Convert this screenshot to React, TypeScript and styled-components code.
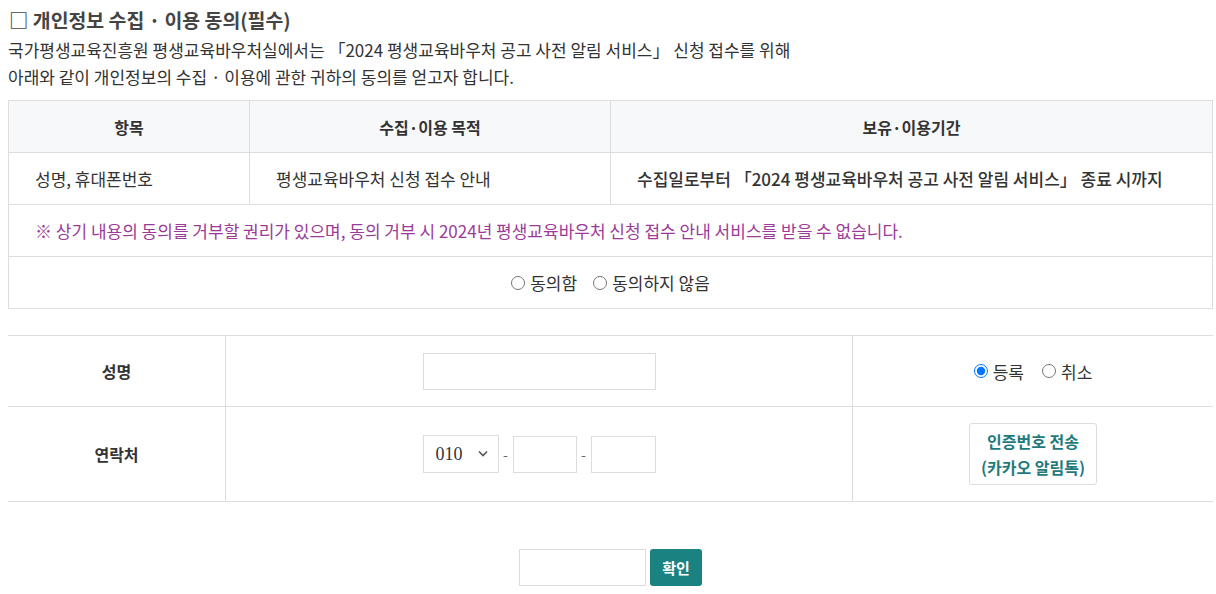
import styled, { createGlobalStyle } from "styled-components";

const GlobalStyle = createGlobalStyle`
  body {
    margin: 0;
    background: #fff;
    font-family: "Noto Sans CJK KR", "Noto Sans", sans-serif;
    color: #333;
  }
`;

const Page = styled.div`
  width: 1205px;
  padding: 8px 0 0 8px;
`;

const Title = styled.h3`
  margin: 0;
  font-size: 19.4px;
  line-height: 24px;
  font-weight: 700;
  color: #444;
  padding-left: 1px;
`;

const Intro = styled.p`
  margin: 4px 0 0;
  font-size: 17px;
  line-height: 27px;
  color: #333;
`;

const ConsentTable = styled.table`
  width: 100%;
  margin-top: 10px;
  border-collapse: collapse;
  font-size: 17px;
  color: #333;
`;

const Th = styled.th<{ $w?: number }>`
  height: 51px;
  padding: 0;
  border: 1px solid #ddd;
  background: #f7f8fa;
  font-size: 16px;
  font-weight: 700;
  text-align: center;
  width: ${(p) => (p.$w ? `${p.$w}px` : "auto")};
`;

const Td = styled.td<{ $bold?: boolean; $center?: boolean; $notice?: boolean }>`
  height: 51px;
  padding: 0 0 0 26px;
  border: 1px solid #ddd;
  font-weight: ${(p) => (p.$bold ? 500 : 400)};
  text-align: ${(p) => (p.$center ? "center" : "left")};
  color: ${(p) => (p.$notice ? "#9c3a99" : "#333")};
  ${(p) => (p.$center ? "padding-left: 0;" : "")}
`;

const RadioLabel = styled.label<{ $gap?: number }>`
  display: inline-flex;
  align-items: center;
  margin: 0 ${(p) => p.$gap ?? 8}px;
  font-size: 17px;
  color: #333;

  input {
    margin: 0 5px 0 0;
    width: 14px;
    height: 14px;
  }
`;

const FormTable = styled.table`
  width: 100%;
  margin-top: 26px;
  border-collapse: collapse;
  border-top: 1px solid #ddd;
`;

const Row = styled.tr<{ $h: number }>`
  height: ${(p) => p.$h}px;
  border-bottom: 1px solid #ddd;
`;

const LabelCell = styled.th`
  width: 217px;
  padding: 0;
  font-size: 16px;
  font-weight: 700;
  color: #333;
  border-right: 1px solid #ddd;
`;

const FieldCell = styled.td`
  padding: 0;
  text-align: center;
  border-right: 1px solid #ddd;
`;

const SideCell = styled.td`
  width: 360px;
  padding: 0;
  text-align: center;
`;

const FieldLine = styled.div`
  display: inline-flex;
  align-items: center;
`;

const TextInput = styled.input<{ $w: number }>`
  box-sizing: border-box;
  width: ${(p) => p.$w}px;
  height: 37px;
  border: 1px solid #ddd;
  padding: 0 8px;
  font-size: 15px;
  outline: none;
  background: #fff;
`;

const SelectWrap = styled.div`
  position: relative;
  display: inline-flex;
`;

const PhoneSelect = styled.select`
  box-sizing: border-box;
  width: 76px;
  height: 38px;
  border: 1px solid #ddd;
  border-radius: 0;
  padding: 0 0 0 12px;
  appearance: none;
  font-family: "Liberation Serif", serif;
  font-size: 18px;
  color: #333;
  background: #fff;
`;

const Chevron = styled.svg`
  position: absolute;
  right: 11px;
  top: 15px;
  pointer-events: none;
`;

const Dash = styled.span`
  width: 14px;
  text-align: center;
  font-size: 14px;
  color: #666;
`;

const SendButton = styled.button`
  width: 128px;
  height: 62px;
  border: 1px solid #ddd;
  border-radius: 3px;
  background: #fff;
  color: #1f7a7e;
  font-family: inherit;
  font-size: 16px;
  font-weight: 700;
  line-height: 26px;
  padding: 0;
  cursor: pointer;
`;

const Footer = styled.div`
  display: flex;
  justify-content: center;
  gap: 4px;
  margin-top: 47px;
`;

const ConfirmButton = styled.button`
  width: 52px;
  height: 37px;
  border: none;
  border-radius: 3px;
  background: #1b8282;
  color: #fff;
  font-family: inherit;
  font-size: 15px;
  font-weight: 700;
  cursor: pointer;
`;

export default function App() {
  return (
    <Page>
      <GlobalStyle />
      <Title>□ 개인정보 수집 · 이용 동의(필수)</Title>
      <Intro>
        국가평생교육진흥원 평생교육바우처실에서는 「2024 평생교육바우처 공고 사전 알림 서비스」 신청 접수를 위해
        <br />
        아래와 같이 개인정보의 수집 · 이용에 관한 귀하의 동의를 얻고자 합니다.
      </Intro>
      <ConsentTable>
        <thead>
          <tr>
            <Th $w={240}>항목</Th>
            <Th $w={360}>수집·이용 목적</Th>
            <Th>보유·이용기간</Th>
          </tr>
        </thead>
        <tbody>
          <tr>
            <Td>성명, 휴대폰번호</Td>
            <Td>평생교육바우처 신청 접수 안내</Td>
            <Td $bold>수집일로부터 「2024 평생교육바우처 공고 사전 알림 서비스」 종료 시까지</Td>
          </tr>
          <tr>
            <Td colSpan={3} $notice>
              ※ 상기 내용의 동의를 거부할 권리가 있으며, 동의 거부 시 2024년 평생교육바우처 신청 접수 안내 서비스를 받을 수 없습니다.
            </Td>
          </tr>
          <tr>
            <Td colSpan={3} $center>
              <RadioLabel>
                <input type="radio" name="agree" />
                동의함
              </RadioLabel>
              <RadioLabel>
                <input type="radio" name="agree" />
                동의하지 않음
              </RadioLabel>
            </Td>
          </tr>
        </tbody>
      </ConsentTable>

      <FormTable>
        <tbody>
          <Row $h={71}>
            <LabelCell>성명</LabelCell>
            <FieldCell>
              <TextInput $w={233} type="text" />
            </FieldCell>
            <SideCell>
              <RadioLabel $gap={9}>
                <input type="radio" name="mode" defaultChecked />
                등록
              </RadioLabel>
              <RadioLabel $gap={9}>
                <input type="radio" name="mode" />
                취소
              </RadioLabel>
            </SideCell>
          </Row>
          <Row $h={95}>
            <LabelCell>연락처</LabelCell>
            <FieldCell>
              <FieldLine>
                <SelectWrap>
                  <PhoneSelect defaultValue="010">
                    <option>010</option>
                    <option>011</option>
                    <option>016</option>
                    <option>017</option>
                    <option>019</option>
                  </PhoneSelect>
                  <Chevron width="10" height="7" viewBox="0 0 10 7">
                    <path d="M1 1.5 L5 5.5 L9 1.5" fill="none" stroke="#555" strokeWidth="1.6" />
                  </Chevron>
                </SelectWrap>
                <Dash>-</Dash>
                <TextInput $w={64} type="text" />
                <Dash>-</Dash>
                <TextInput $w={65} type="text" />
              </FieldLine>
            </FieldCell>
            <SideCell>
              <SendButton>
                인증번호 전송
                <br />
                (카카오 알림톡)
              </SendButton>
            </SideCell>
          </Row>
        </tbody>
      </FormTable>

      <Footer>
        <TextInput $w={127} type="text" />
        <ConfirmButton>확인</ConfirmButton>
      </Footer>
    </Page>
  );
}
